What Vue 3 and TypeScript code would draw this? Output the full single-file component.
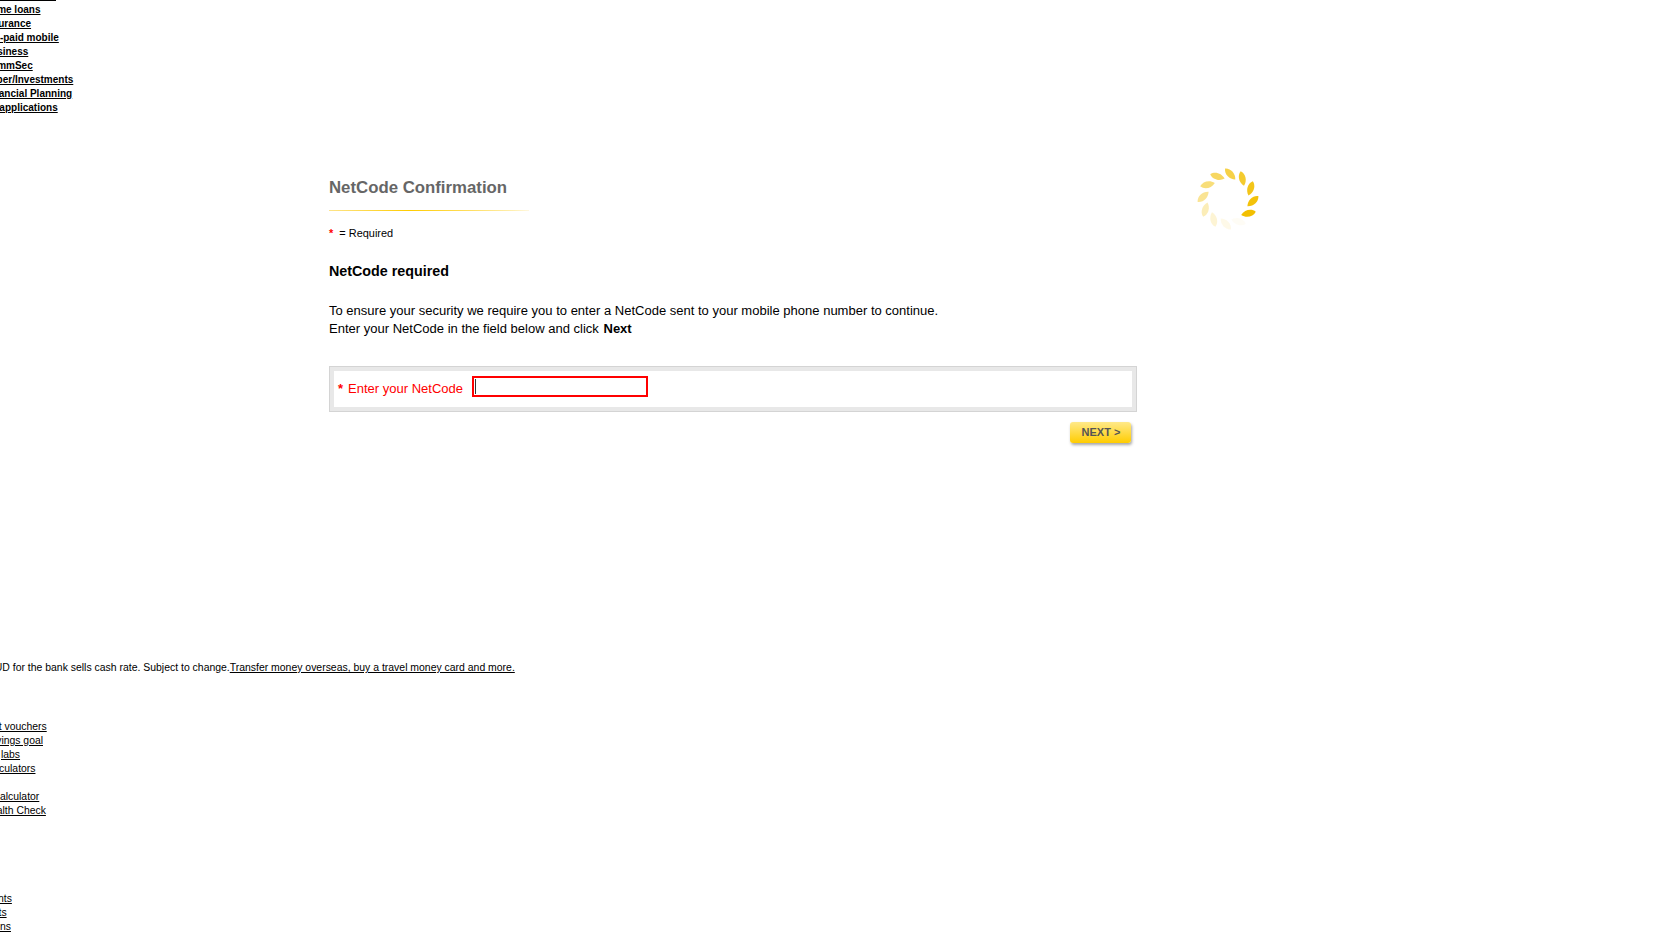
<script setup lang="ts">
interface Row { text: string; x: number }
const L = -16.2
const nav: string[] = ['Home loans', 'Insurance', 'Pre-paid mobile', 'Business', 'CommSec', 'Super/Investments', 'Financial Planning', 'All applications']
const tools: Row[] = [
  { text: 'Gift vouchers', x: -14.5 },
  { text: 'Savings goal', x: -16.5 },
  { text: 'labs', x: 1 },
  { text: 'Calculators', x: -16.5 },
  { text: '', x: 0 },
  { text: 'alculator', x: 0 },
  { text: 'Health Check', x: -16.5 },
]
const legal: Row[] = [
  { text: 'nts', x: -2 },
  { text: 'ts', x: -1.5 },
  { text: 'ns', x: 0 },
]
const petals = Array.from({ length: 12 }, (_, i) => ({
  angle: i * 30 + 5,
  opacity: [0.72, 0.82, 0.9, 0.96, 1, 0.04, 0.09, 0.17, 0.28, 0.42, 0.52, 0.62][i],
}))
</script>

<template>
  <div class="page">
    <div class="topline"></div>
    <nav class="nav">
      <a v-for="n in nav" :key="n" class="nav-link" :style="{ marginLeft: L + 'px' }" href="#">{{ n }}</a>
    </nav>

    <main class="main">
      <div class="col">
        <h1 class="title">NetCode Confirmation</h1>
        <div class="rule"></div>
        <p class="req"><span class="star">*</span> = Required</p>
        <h2 class="sub">NetCode required</h2>
        <p class="body">To ensure your security we require you to enter a NetCode sent to your mobile phone number to continue.<br />Enter your NetCode in the field below and click <b>Next</b></p>
        <div class="field-box">
          <div class="field">
            <label class="label" for="nc"><span class="lstar">*</span>Enter your NetCode</label>
            <span class="input-wrap">
              <input id="nc" class="input" type="text" />
              <i class="caret"></i>
            </span>
          </div>
        </div>
        <div class="actions"><button class="next" type="button">NEXT &gt;</button></div>
      </div>
      <svg class="spinner" width="70" height="70" viewBox="-35 -35 70 70" aria-hidden="true">
        <g v-for="p in petals" :key="p.angle" :transform="`rotate(${p.angle}) translate(0 -25) rotate(-48)`" :opacity="p.opacity">
          <path d="M0 -7.5 C4.4 -4 4.4 3.2 0 7.5 C-4.4 3.2 -4.4 -4 0 -7.5 Z" fill="#f2bf00" />
        </g>
      </svg>
    </main>

    <p class="rates"><span class="rates-text">AUD for the bank sells cash rate. Subject to change.</span><a href="#">Transfer money overseas, buy a travel money card and more.</a></p>

    <div class="list tools">
      <a v-for="(t, i) in tools" :key="i" href="#" :style="{ marginLeft: t.x + 'px' }">{{ t.text }}</a>
    </div>
    <div class="list legal">
      <a v-for="(t, i) in legal" :key="i" href="#" :style="{ marginLeft: t.x + 'px' }">{{ t.text }}</a>
    </div>
  </div>
</template>

<style>
html, body { margin: 0; background: #fff; overflow: hidden; }
</style>

<style scoped>
.page {
  width: 1656px;
  height: 942px;
  overflow: hidden;
  font-family: "Liberation Sans", Arial, sans-serif;
  color: #000;
  display: flex;
  flex-direction: column;
}
.topline { width: 56px; height: 1px; background: #000; flex: none; }
.nav {
  display: flex;
  flex-direction: column;
  align-items: flex-start;
  margin-top: 2px;
  height: 113px;
  flex: none;
}
.nav-link {
  font-size: 10px;
  font-weight: 700;
  line-height: 14px;
  color: #000;
  white-space: nowrap;
}
.main {
  display: flex;
  align-items: flex-start;
  margin-left: 329px;
  height: 545px;
  flex: none;
}
.col { width: 808px; flex: none; padding-top: 61px; }
.title {
  margin: 0;
  font-size: 16.8px;
  line-height: 22px;
  font-weight: 700;
  color: #666;
}
.rule {
  width: 200px;
  height: 1px;
  margin-top: 11px;
  background: linear-gradient(90deg, #fde48a 0%, #ffcc00 40%, #ffdf66 72%, #ffefb0 92%, #fff8e0 100%);
}
.req {
  margin: 15px 0 0;
  font-size: 10.95px;
  line-height: 14px;
}
.star { color: #f00; font-weight: 700; margin-right: 3px; }
.sub {
  margin: 22px 0 0;
  font-size: 14.3px;
  line-height: 18px;
  font-weight: 700;
}
.body {
  margin: 22px 0 0;
  font-size: 13.03px;
  line-height: 18px;
}
.body b { margin-left: 1px; }
.field-box {
  margin-top: 28px;
  border: 1px solid #d4d4d4;
  background: #fff;
  box-sizing: border-box;
  height: 46px;
}
.field {
  border: 4px solid #e8e8e8;
  height: 44px;
  box-sizing: border-box;
  display: flex;
  align-items: center;
  padding-left: 4px;
}
.label {
  font-size: 13px;
  color: #f00;
  width: 134px;
  flex: none;
  white-space: nowrap;
  margin-top: -2px;
}
.lstar { font-weight: 700; margin-right: 5px; }
.input-wrap { position: relative; display: block; margin-top: -5px; }
.input {
  display: block;
  width: 176px;
  height: 21px;
  box-sizing: border-box;
  border: 2px solid #f00;
  padding: 0;
  outline: none;
  background: #fff;
  caret-color: transparent;
}
.caret {
  position: absolute;
  left: 3px;
  top: 3px;
  width: 1px;
  height: 15px;
  background: #333;
}
.actions { display: flex; justify-content: flex-end; padding-right: 6px; margin-top: 10px; }
.next {
  width: 61px;
  height: 21px;
  padding: 0 0 2px 1px;
  border: 0;
  border-radius: 3px;
  font-family: inherit;
  font-size: 11px;
  font-weight: 700;
  color: #555;
  background: linear-gradient(180deg, #ffe98a 0%, #ffdb45 50%, #ffcc00 100%);
  box-shadow: 1px 2px 3px rgba(0, 0, 0, 0.35);
}
.spinner { margin-left: 56px; margin-top: 48px; flex: none; }
.rates {
  margin: 0 0 0 -12.2px;
  font-size: 10.45px;
  line-height: 14px;
  white-space: nowrap;
  flex: none;
}
.rates a { color: #000; }
.list {
  display: flex;
  flex-direction: column;
  align-items: flex-start;
  flex: none;
}
.list a {
  font-size: 10.4px;
  line-height: 14px;
  min-height: 14px;
  color: #000;
  white-space: nowrap;
}
.tools { margin-top: 45px; }
.legal { margin-top: 74px; }
</style>
